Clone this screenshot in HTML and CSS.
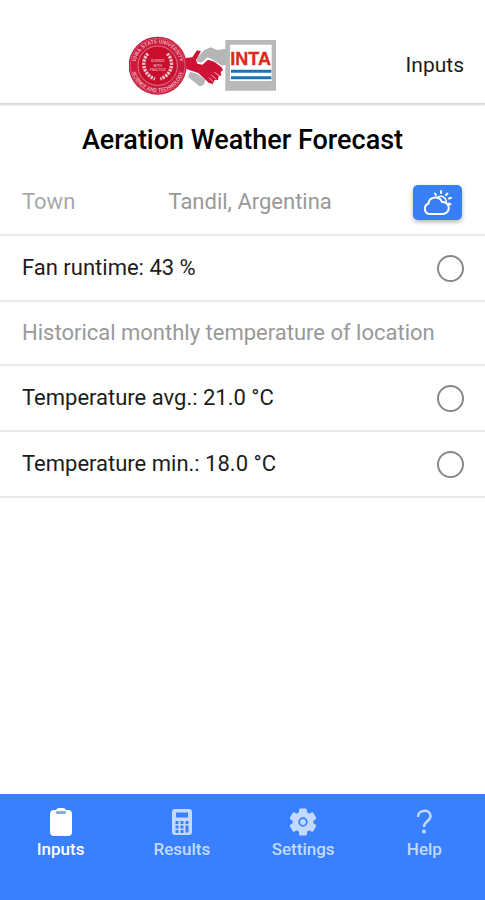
FILE: index.html
```html
<!DOCTYPE html>
<html lang="en">
<head>
  <meta charset="UTF-8">
  <meta name="viewport" content="width=device-width, initial-scale=1">
  <title>Aeration Weather Forecast</title>
  <link rel="stylesheet" href="styles.css">
</head>
<body>

  <header class="header">
    <svg class="logo" viewBox="27 27 444 180" role="img" aria-label="Iowa State University and INTA">
      <defs>
        <path id="ringTop" d="M46 119a67 67 0 0 1 134 0"/>
        <path id="ringBottom" d="M34 119a79 79 0 0 0 158 0"/>
      </defs>
      <!-- grey hand -->
      <path d="M318 68L292 72L272 64L252 73L230 96L231 107L245 110L262 94L279 101L306 119L318 116Z" fill="#b5b6b8"/>
      <path d="M210 137L232 144L256 161L251 177L239 181L204 153Z" fill="#b5b6b8"/>
      <!-- red hand -->
      <path d="M196 96L217 94L231 73L243 76L228 101L232 113L247 116L264 101L283 107L305 124L309 133L302 138L304 148L296 151L294 162L284 162L278 174L267 171L235 141L199 129Z" fill="#ce1235"/>
      <path d="M283 139l15 10M274 147l15 13M267 155l12 11" stroke="#fff" stroke-width="2"/>
      <!-- university seal -->
      <circle cx="113" cy="119" r="87" fill="#cb1a3b"/>
      <circle cx="113" cy="119" r="82" fill="none" stroke="#df7186" stroke-width="2"/>
      <circle cx="113" cy="119" r="59" fill="#c8102e" stroke="#e07a8d" stroke-width="3"/>
      <g fill="#eca5b2" font-size="16" font-weight="700">
        <text><textPath href="#ringTop" startOffset="50%" text-anchor="middle">IOWA STATE UNIVERSITY</textPath></text>
        <text><textPath href="#ringBottom" startOffset="50%" text-anchor="middle">SCIENCE AND TECHNOLOGY</textPath></text>
      </g>
      <g fill="none" stroke="#f3c4cc" stroke-width="10" stroke-dasharray="7 3">
        <path d="M84 83C65 101 64 143 105 159"/>
        <path d="M142 83C161 101 162 143 121 159"/>
      </g>
      <g fill="#e99aa9" font-size="10" font-weight="700" text-anchor="middle">
        <text x="113" y="109">SCIENCE</text>
        <text x="113" y="122">WITH</text>
        <text x="113" y="135">PRACTICE</text>
      </g>
      <!-- INTA badge -->
      <path d="M316 42h152v152H316z" fill="#b8b9bb"/>
      <path d="M330 56h125v109H330z" fill="#fff"/>
      <text class="inta" x="392" y="117" text-anchor="middle">INTA</text>
      <path d="M333 136h121M333 155h121" stroke="#1874b8" stroke-width="9"/>
    </svg>
    <span class="page-name">Inputs</span>
  </header>

  <main class="content">
    <h1 class="title">Aeration Weather Forecast</h1>

    <form class="list">
      <div class="row town-row">
        <label for="town">Town</label>
        <input type="text" id="town" class="town" placeholder="Tandil, Argentina">
        <button type="button" class="weather-btn" aria-label="Get weather">
          <svg width="32" height="28" viewBox="1 -1 32 28" fill="none" stroke="#fff" stroke-width="2" stroke-linecap="round">
            <path d="M8 25a5.500 5.500 0 0 1-.5-10.500a7 7 0 0 1 13.500-1.500a6 6 0 0 1 1.500 12z"/>
            <path d="M16.500 8.500a5.500 5.500 0 0 1 8.500 6" stroke-width="1.500"/>
            <path d="M20 2v2M14 4.500l1 1.500M26.500 4.500l-1.500 1.500M28 9.500l2-.7M28 14.500l1.500.8"/>
          </svg>
        </button>
      </div>

      <div class="row">
        <label for="fan">Fan runtime: 43 %</label>
        <input type="radio" id="fan" name="source" class="radio">
      </div>

      <div class="row heading-row">Historical monthly temperature of location</div>

      <div class="row">
        <label for="avg">Temperature avg.: 21.0 °C</label>
        <input type="radio" id="avg" name="source" class="radio">
      </div>

      <div class="row">
        <label for="min">Temperature min.: 18.0 °C</label>
        <input type="radio" id="min" name="source" class="radio">
      </div>
    </form>
  </main>

  <nav class="tabs">
    <a href="#inputs" class="tab active">
      <svg class="tab-icon" viewBox="0 0 28 30">
        <path d="M7 3h2q1-2 3-2h4q2 0 3 2h2q4 0 4 4v18q0 4-4 4H7q-4 0-4-4V7q0-4 4-4z" fill="currentColor"/>
        <rect x="9" y="4" width="10" height="3" rx="1" fill="#8bacda"/>
      </svg>
      Inputs
    </a>
    <a href="#results" class="tab">
      <svg class="tab-icon" viewBox="0 0 28 30">
        <path fill="currentColor" fill-rule="evenodd" d="M7 2h14q3 0 3 3v20q0 3-3 3H7q-3 0-3-3V5q0-3 3-3zM8 5.500h12v5H8zM7.500 14h3v3h-3zM12.500 14h3v3h-3zM17.500 14h3v3h-3zM7.500 18.500h3v3h-3zM12.500 18.500h3v3h-3zM17.500 18.500h3v7h-3zM7.500 23h3v3h-3zM12.500 23h3v3h-3z"/>
      </svg>
      Results
    </a>
    <a href="#settings" class="tab">
      <svg class="tab-icon" viewBox="0 0 28 30">
        <g fill="currentColor">
          <circle cx="14" cy="15" r="10.500"/>
          <rect x="10" y="1.500" width="8" height="27" rx="1.500"/>
          <rect x="10" y="1.500" width="8" height="27" rx="1.500" transform="rotate(60 14 15)"/>
          <rect x="10" y="1.500" width="8" height="27" rx="1.500" transform="rotate(120 14 15)"/>
        </g>
        <circle cx="14" cy="15" r="3.800" fill="none" stroke="#3880ff" stroke-width="1.800"/>
      </svg>
      Settings
    </a>
    <a href="#help" class="tab">
      <svg class="tab-icon" viewBox="0 0 28 30">
        <path d="M8 10c0-8 12.500-8 12.500-1c0 5.500-6.500 5-6.500 11" fill="none" stroke="currentColor" stroke-width="2.500"/>
        <circle cx="14" cy="24.500" r="1.900" fill="currentColor"/>
      </svg>
      Help
    </a>
  </nav>

</body>
</html>
```
FILE: styles.css
```css
* {
  box-sizing: border-box;
}

body {
  margin: 0;
  min-height: 100vh;
  display: flex;
  flex-direction: column;
  font-family: Roboto, sans-serif;
  font-size: 22px;
  line-height: 28px;
  color: #1c1c1c;
  background-color: #fff;
}

.header {
  display: grid;
  grid-template-columns: 1fr auto 1fr;
  align-items: center;
  padding: 28px 21px 2px;
  min-height: 103px;
  box-shadow: 0 1px 2px 1px #d2d2d2;
}

.logo {
  grid-column: 2;
  width: 148px;
  height: 60px;
  margin-right: 80px;
}

.inta {
  font-family: "Liberation Sans", sans-serif;
  font-size: 54px;
  font-weight: 700;
  fill: #dc2a1c;
  stroke: #dc2a1c;
  stroke-width: 1px;
}

.page-name {
  justify-self: end;
  font-size: 21px;
}

.content {
  flex: 1;
}

.title {
  margin: 0;
  padding: 23px 20px 16px;
  font-size: 27px;
  font-weight: 500;
  line-height: 28px;
  text-align: center;
  color: #000;
}

.row {
  display: flex;
  align-items: center;
  justify-content: space-between;
  min-height: 66px;
  padding: 0 21px 0 22px;
  border-bottom: 2px solid #e9e9e9;
}

.town-row {
  gap: 12px;
  padding-right: 23px;
  color: #a8a8a8;
}

.heading-row {
  min-height: 64px;
  color: #999;
}

.town {
  flex: 1;
  min-width: 0;
  padding: 0 0 0 12px;
  border: none;
  outline: none;
  font: inherit;
  text-align: center;
  background: none;
}

.town::placeholder {
  color: #999;
  opacity: 1;
}

.weather-btn {
  display: flex;
  align-items: center;
  justify-content: center;
  width: 49px;
  height: 35px;
  padding: 0;
  border: none;
  border-radius: 5px;
  background-color: #387ef5;
  box-shadow: 0 2px 4px rgba(0, 0, 0, 0.3);
  cursor: pointer;
}

.radio {
  appearance: none;
  width: 27px;
  height: 27px;
  margin: 0;
  border: 2px solid #888;
  border-radius: 50%;
}

.radio:checked {
  border: 8px solid #387ef5;
}

.tabs {
  display: grid;
  grid-template-columns: repeat(4, 1fr);
  min-height: 106px;
  padding-top: 13px;
  background-color: #3880ff;
}

.tab {
  display: flex;
  flex-direction: column;
  align-items: center;
  font-size: 17px;
  line-height: 24px;
  font-weight: 500;
  text-decoration: none;
  color: #c3d9ff;
}

.tab.active {
  color: #fff;
}

.tab-icon {
  width: 28px;
  height: 30px;
}
```
